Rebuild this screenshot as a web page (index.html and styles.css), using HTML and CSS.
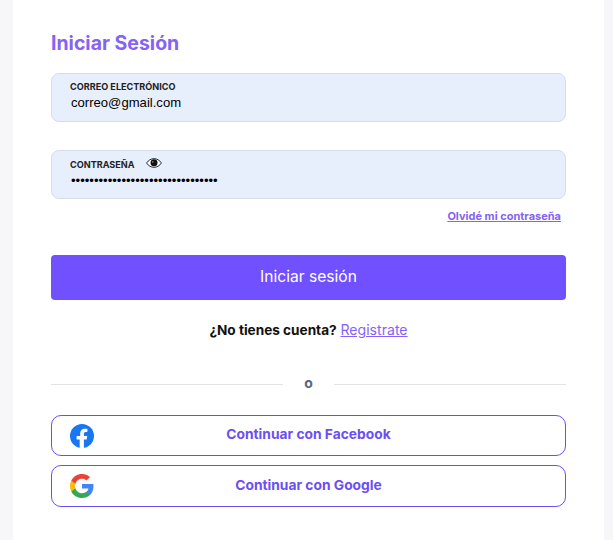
FILE: index.html
```html
<!DOCTYPE html>
<html lang="es">
<head>
    <meta charset="UTF-8">
    <meta name="viewport" content="width=device-width, initial-scale=1.0">
    <title>Iniciar Sesión</title>
    <link rel="stylesheet" href="styles.css">
</head>
<body>
    <main class="card">
        <h1 class="title">Iniciar Sesión</h1>

        <div class="field">
            <label class="field-label" for="email">CORREO ELECTRÓNICO</label>
            <input class="field-input" id="email" type="text" value="correo@gmail.com">
        </div>

        <div class="field field-password">
            <div class="field-head">
                <label class="field-label" for="password">CONTRASEÑA</label>
                <svg class="eye" viewBox="0 0 16 10" width="16" height="10" aria-hidden="true">
                    <path d="M.6 5C2.4 2.2 5 .7 8 .7s5.600 1.500 7.400 4.300C13.600 7.800 11 9.300 8 9.300S2.400 7.800.6 5z" fill="#fff" stroke="#1b2a44" stroke-width="1"/>
                    <circle cx="8" cy="4.800" r="3.500" fill="#111"/>
                    <circle cx="6.800" cy="3.800" r=".9" fill="#b9792f"/>
                </svg>
            </div>
            <input class="field-input" id="password" type="password" value="aaaaaaaaaaaaaaaaaaaaaaaaaaaaaaaa">
        </div>

        <div class="forgot-row"><a class="forgot" href="#">Olvidé mi contraseña</a></div>

        <button class="submit" type="button">Iniciar sesión</button>

        <p class="signup"><strong>¿No tienes cuenta?</strong> <a href="#">Registrate</a></p>

        <div class="divider"><span>o</span></div>

        <button class="social" type="button">
            <svg class="social-icon" viewBox="0 0 24 24" width="24" height="24" aria-hidden="true">
                <circle cx="12" cy="12" r="12" fill="#1877f2"/>
                <path d="M16.700 15.500l.5-3.500h-3.300V9.800c0-1 .5-1.900 2-1.900h1.500V4.900s-1.400-.2-2.700-.2c-2.700 0-4.500 1.600-4.500 4.600V12H6.600v3.500h3.100V24h4.200v-8.500z" fill="#fff"/>
            </svg>
            <span>Continuar con Facebook</span>
        </button>

        <button class="social social-google" type="button">
            <svg class="social-icon" viewBox="0 0 24 24" width="24" height="24" aria-hidden="true">
                <path d="M23.500 12.300c0-.8-.1-1.600-.2-2.400H12v4.500h6.500c-.3 1.500-1.100 2.700-2.400 3.600v3h3.900c2.200-2.100 3.500-5.100 3.500-8.700z" fill="#4285f4"/>
                <path d="M12 24c3.200 0 6-1.100 8-2.900l-3.900-3c-1.100.7-2.400 1.200-4.100 1.200-3.100 0-5.800-2.100-6.700-5H1.300v3.100C3.300 21.300 7.300 24 12 24z" fill="#34a853"/>
                <path d="M5.300 14.300c-.5-1.500-.5-3.100 0-4.600V6.600h-4c-1.700 3.400-1.700 7.400 0 10.800z" fill="#fbbc05"/>
                <path d="M12 4.700c1.800 0 3.300.6 4.600 1.800l3.400-3.400C17.900 1.200 15.100 0 12 0 7.300 0 3.300 2.700 1.300 6.600l4 3.100c.9-2.900 3.600-5 6.700-5z" fill="#ea4335"/>
            </svg>
            <span>Continuar con Google</span>
        </button>
    </main>
</body>
</html>
```

FILE: styles.css
```css
* { box-sizing: border-box; }
body { margin: 0; height: 540px; overflow: hidden; background: #f7f7fa; font-family: Inter, "Open Sans", sans-serif; color: #111; }
.card { width: 591px; height: 540px; margin-left: 13px; padding: 32px 38px 0; background: #fff; }

.title { margin: 0 0 19px; height: 22px; font-size: 19.500px; line-height: 22px; font-weight: 700; color: #8563f5; }

.field { display: flex; flex-direction: column; height: 49px; padding: 7px 18px 0; background: #e8effc; border: 1px solid #d8dbe8; border-radius: 8px; }
.field-password { margin-top: 28px; padding-top: 8px; }
.field-head { display: flex; align-items: center; gap: 11px; height: 11px; }
.field-label { display: block; height: 11px; font-size: 9.100px; line-height: 11px; font-weight: 700; color: #222; }
.field-input { width: 100%; height: 18px; margin-top: 1px; padding: 0 0 0 1px; border: 0; outline: 0; background: transparent; font-family: "Liberation Sans", sans-serif; font-size: 13.100px; color: #000; }
.eye { margin-top: -4px; }

.forgot-row { display: flex; justify-content: flex-end; padding-right: 5px; margin-top: 10px; height: 14px; }
.forgot { font-size: 11px; line-height: 14px; font-weight: 700; color: #8563f5; }

.submit { display: block; width: 100%; height: 45px; margin-top: 32px; padding: 0 0 2px; border: 0; border-radius: 4px; background: #7050ff; color: #fff; font-family: inherit; font-size: 15.600px; cursor: pointer; }

.signup { margin: 20px 0 0; height: 20px; text-align: center; font-size: 13.600px; line-height: 20px; color: #111; }
.signup strong { font-weight: 700; }
.signup a { color: #8563f5; font-size: 14.100px; }

.divider { display: flex; align-items: center; gap: 21px; height: 20px; margin-top: 34px; font-size: 14px; font-weight: 700; color: #5a6488; }
.divider span { padding-bottom: 3px; }
.divider::before, .divider::after { content: ""; flex: 1; height: 1px; background: #e3e3e3; }

.social { display: flex; align-items: center; width: 100%; height: 41px; margin-top: 21px; padding: 0 18px; border: 1px solid #6a4ff5; border-radius: 10px; background: #fff; color: #6a4ff5; font-family: inherit; font-size: 13.800px; font-weight: 700; cursor: pointer; }
.social span { flex: 1; padding: 0 24px 3px 0; text-align: center; }
.social-google { height: 42px; margin-top: 9px; }
.social-icon { flex: none; }
```
